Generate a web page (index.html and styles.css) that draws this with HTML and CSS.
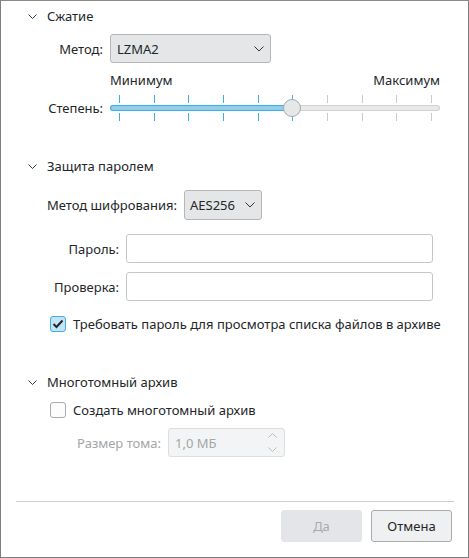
FILE: index.html
```html
<!DOCTYPE html>
<html>
<head>
<meta charset="utf-8">
<link rel="stylesheet" href="styles.css">
</head>
<body>
<div class="dialog">
  <div class="section-head h1">
    <svg class="chev" width="9" height="5" viewBox="0 0 9 5"><polyline points="0.5,0.5 4.5,4.5 8.5,0.5" fill="none" stroke="#31363b" stroke-width="1"/></svg>
    <span>Сжатие</span>
  </div>

  <div class="row r-method">
    <div class="lbl w103">Метод:</div>
    <div class="combo combo-lzma">
      <span>LZMA2</span>
      <svg width="10" height="6" viewBox="0 0 10 6"><polyline points="0.5,0.5 5,5 9.5,0.5" fill="none" stroke="#31363b" stroke-width="1"/></svg>
    </div>
  </div>

  <div class="row r-minmax">
    <div class="w103"></div>
    <div class="minmax"><span>Минимум</span><span>Максимум</span></div>
  </div>

  <div class="row r-slider">
    <div class="lbl w103">Степень:</div>
    <div class="slider">
      <div class="ticks">
        <i class="on"></i><i class="on"></i><i class="on"></i><i class="on"></i><i class="on"></i><i class="on"></i><i></i><i></i><i></i><i></i>
      </div>
      <div class="track">
        <div class="fill" style="width:183px"></div>
        <div class="rest"></div>
      </div>
      <div class="ticks">
        <i class="on"></i><i class="on"></i><i class="on"></i><i class="on"></i><i class="on"></i><i class="on"></i><i></i><i></i><i></i><i></i>
      </div>
      <div class="handle" style="left:173px"></div>
    </div>
  </div>

  <div class="section-head h2">
    <svg class="chev" width="9" height="5" viewBox="0 0 9 5"><polyline points="0.5,0.5 4.5,4.5 8.5,0.5" fill="none" stroke="#31363b" stroke-width="1"/></svg>
    <span>Защита паролем</span>
  </div>

  <div class="row r-enc">
    <div class="lbl w176">Метод шифрования:</div>
    <div class="combo combo-aes">
      <span>AES256</span>
      <svg width="10" height="6" viewBox="0 0 10 6"><polyline points="0.5,0.5 5,5 9.5,0.5" fill="none" stroke="#31363b" stroke-width="1"/></svg>
    </div>
  </div>

  <div class="row r-pass">
    <div class="lbl w118">Пароль:</div>
    <div class="input"></div>
  </div>

  <div class="row r-verify">
    <div class="lbl w118">Проверка:</div>
    <div class="input"></div>
  </div>

  <div class="check-row r-check1">
    <div class="cb checked">
      <svg width="12" height="10" viewBox="0 0 12 10"><polyline points="1.5,5 4.5,8 10.5,1.5" fill="none" stroke="#232629" stroke-width="2"/></svg>
    </div>
    <span>Требовать пароль для просмотра списка файлов в архиве</span>
  </div>

  <div class="section-head h3">
    <svg class="chev" width="9" height="5" viewBox="0 0 9 5"><polyline points="0.5,0.5 4.5,4.5 8.5,0.5" fill="none" stroke="#31363b" stroke-width="1"/></svg>
    <span>Многотомный архив</span>
  </div>

  <div class="check-row r-check2">
    <div class="cb"></div>
    <span>Создать многотомный архив</span>
  </div>

  <div class="row r-size">
    <div class="lbl w160 dis">Размер тома:</div>
    <div class="spin">
      <span>1,0 МБ</span>
      <div class="arrows">
        <svg width="9" height="5" viewBox="0 0 9 5"><polyline points="0.5,4.5 4.5,0.5 8.5,4.5" fill="none" stroke="#b8babc" stroke-width="1"/></svg>
        <svg width="9" height="5" viewBox="0 0 9 5"><polyline points="0.5,0.5 4.5,4.5 8.5,0.5" fill="none" stroke="#b8babc" stroke-width="1"/></svg>
      </div>
    </div>
  </div>

  <div class="spacer"></div>
  <div class="sep"></div>
  <div class="buttons">
    <div class="btn disabled">Да</div>
    <div class="btn">Отмена</div>
  </div>
</div>
</body>
</html>
```

FILE: styles.css
```css
html, body {
  margin: 0;
  padding: 0;
  background: #ffffff;
}
.dialog {
  width: 469px;
  height: 558px;
  box-sizing: border-box;
  border: 1px solid #7d7d7d;
  border-top-color: #8a8a8a;
  display: flex;
  flex-direction: column;
  font-family: "Noto Sans", "DejaVu Sans", sans-serif;
  font-size: 13px;
  color: #232629;
  background: #ffffff;
}
.section-head {
  display: flex;
  align-items: center;
  height: 20px;
  padding-left: 27px;
}
.section-head .chev {
  margin-right: 10px;
}
.h1 { margin-top: 5px; }
.h2 { margin-top: 35px; }
.h3 { margin-top: 39px; }

.row {
  display: flex;
  align-items: center;
}
.lbl {
  text-align: right;
  flex: none;
  margin-right: 7px;
  white-space: nowrap;
}
.w103 { width: 102px; flex: none; margin-right: 7px; }
.w176 { width: 176px; }
.w118 { width: 118px; }
.w160 { width: 160px; }
.dis { color: #a4a6a8; }

.r-method { margin-top: 8px; height: 29px; }
.r-minmax { margin-top: 9px; height: 17px; }
.r-slider { margin-top: 6px; height: 26px; }
.r-enc { margin-top: 14px; height: 30px; }
.r-pass { margin-top: 14px; height: 29px; }
.r-verify { margin-top: 9px; height: 29px; }
.r-size { margin-top: 9px; height: 29px; }

.combo {
  box-sizing: border-box;
  height: 100%;
  display: flex;
  align-items: center;
  justify-content: space-between;
  background: #e4e6e8;
  border: 1px solid #b4b6b8;
  border-radius: 3px;
  padding: 0 6px 0 6px;
}
.combo-lzma { width: 161px; }
.combo-aes { width: 78px; padding-left: 5px; }

.minmax {
  width: 330px;
  display: flex;
  justify-content: space-between;
  line-height: 17px;
}

.slider {
  position: relative;
  width: 330px;
  height: 26px;
  display: flex;
  flex-direction: column;
  justify-content: space-between;
}
.ticks {
  display: flex;
  justify-content: space-between;
  padding: 0 8px 0 9px;
  height: 8px;
}
.ticks i {
  display: block;
  width: 1px;
  height: 8px;
  background: #c8c9ca;
}
.ticks i.on { background: #3daee9; }
.track {
  height: 6px;
  display: flex;
}
.fill {
  flex: none;
  box-sizing: border-box;
  height: 6px;
  background: #93cee9;
  border: 1px solid #3daee9;
  border-right: none;
  border-radius: 3px 0 0 3px;
}
.rest {
  flex: 1;
  box-sizing: border-box;
  height: 6px;
  background: #e8e9ea;
  border: 1px solid #cfd0d1;
  border-left: none;
  border-radius: 0 3px 3px 0;
}
.handle {
  position: absolute;
  top: 4px;
  width: 18px;
  height: 18px;
  box-sizing: border-box;
  border-radius: 50%;
  background: #e5e7e9;
  border: 1px solid #a6a8ab;
}

.input {
  box-sizing: border-box;
  width: 307px;
  height: 100%;
  border: 1px solid #c4c6c8;
  border-radius: 3px;
  background: #ffffff;
}

.check-row {
  display: flex;
  align-items: center;
  height: 18px;
  padding-left: 49px;
}
.r-check1 { margin-top: 14px; }
.r-check2 { margin-top: 9px; }
.cb {
  box-sizing: border-box;
  width: 16px;
  height: 16px;
  border: 1px solid #a8aaac;
  border-radius: 3px;
  background: #fcfcfc;
  margin-right: 7px;
  display: flex;
  align-items: center;
  justify-content: center;
}
.cb.checked {
  background: #c3e4f5;
  border-color: #3daee9;
}

.spin {
  box-sizing: border-box;
  width: 117px;
  height: 100%;
  border: 1px solid #dcdee0;
  border-radius: 3px;
  background: #f3f4f5;
  color: #a4a6a8;
  display: flex;
  align-items: center;
  justify-content: space-between;
  padding: 0 7px 0 6px;
  margin-left: 0;
}
.arrows {
  display: flex;
  flex-direction: column;
  gap: 9px;
}
.arrows svg { display: block; }

.spacer { flex: 1; }
.sep {
  height: 1px;
  background: #cbcccd;
  margin: 0 14px 0 15px;
}
.buttons {
  display: flex;
  justify-content: flex-end;
  gap: 9px;
  margin-top: 8px;
  padding-right: 16px;
  margin-bottom: 15px;
}
.btn {
  box-sizing: border-box;
  width: 81px;
  height: 32px;
  display: flex;
  align-items: center;
  justify-content: center;
  border: 1px solid #a9abad;
  border-radius: 3px;
  background: #eff0f1;
  color: #232629;
}
.btn.disabled {
  background: #e3e5e8;
  border-color: #e3e5e8;
  color: #a8aaac;
}
```
